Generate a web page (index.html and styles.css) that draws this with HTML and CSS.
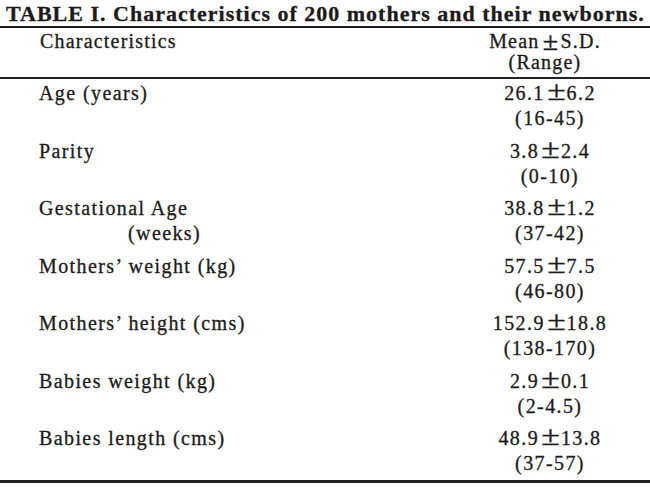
FILE: index.html
```html
<!DOCTYPE html>
<html lang="en">
<head>
<meta charset="utf-8">
<title>Table I</title>
<link rel="stylesheet" href="styles.css">
</head>
<body>
<div class="sheet">
  <h1 class="title">TABLE I. Characteristics of 200 mothers and their newborns.</h1>
  <div class="head">
    <div class="label">Characteristics</div>
    <div class="value head-value">Mean<span class="pm pm-head">±</span>S.D.<br>(Range)</div>
  </div>
  <div class="rows">
    <div class="row">
      <div class="label">Age (years)</div>
      <div class="value">26.1<span class="pm">±</span>6.2<br>(16-45)</div>
    </div>
    <div class="row">
      <div class="label">Parity</div>
      <div class="value">3.8<span class="pm">±</span>2.4<br>(0-10)</div>
    </div>
    <div class="row">
      <div class="label">Gestational Age<br><span class="indent">(weeks)</span></div>
      <div class="value">38.8<span class="pm">±</span>1.2<br>(37-42)</div>
    </div>
    <div class="row">
      <div class="label">Mothers’ weight (kg)</div>
      <div class="value">57.5<span class="pm">±</span>7.5<br>(46-80)</div>
    </div>
    <div class="row">
      <div class="label">Mothers’ height (cms)</div>
      <div class="value">152.9<span class="pm">±</span>18.8<br>(138-170)</div>
    </div>
    <div class="row">
      <div class="label">Babies weight (kg)</div>
      <div class="value">2.9<span class="pm">±</span>0.1<br>(2-4.5)</div>
    </div>
    <div class="row">
      <div class="label">Babies length (cms)</div>
      <div class="value">48.9<span class="pm">±</span>13.8<br>(37-57)</div>
    </div>
  </div>
</div>
</body>
</html>
```
FILE: styles.css
```css
html, body {
  margin: 0;
  padding: 0;
  background: #ffffff;
}

.sheet {
  width: 650px;
  color: #1c1a1a;
  font-family: "Liberation Serif", "DejaVu Serif", serif;
}

.title {
  margin: 0;
  padding: 2px 0 0 6px;
  font-size: 22px;
  line-height: 24px;
  font-weight: bold;
  letter-spacing: 1px;
  white-space: nowrap;
  -webkit-text-stroke: 0.3px #1c1a1a;
  border-bottom: 2px solid #1a1a1a;
}

.head {
  display: grid;
  grid-template-columns: 1fr 200px;
  padding: 2.5px 0 4.5px 0;
  font-size: 20px;
  line-height: 21px;
  letter-spacing: 1.2px;
  -webkit-text-stroke: 0.3px #1c1a1a;
  border-bottom: 2px solid #222;
}

.head .label {
  padding-left: 40px;
}

.head-value {
  padding-right: 10px;
}

.rows {
  padding: 2px 0 4px 0;
  border-bottom: 3px solid #1e1e1e;
}

.row {
  display: grid;
  grid-template-columns: 1fr 200px;
  font-size: 20px;
  line-height: 25px;
  letter-spacing: 1.4px;
  -webkit-text-stroke: 0.3px #1c1a1a;
  padding-bottom: 7.5px;
}

.row:last-child {
  padding-bottom: 0;
}

.label {
  padding-left: 39px;
  white-space: nowrap;
}

.indent {
  padding-left: 89px;
}

.value {
  text-align: center;
  white-space: nowrap;
}

.pm {
  display: inline-block;
  font-size: 1.35em;
  line-height: 0;
  margin: 0 3px 0 4px;
  letter-spacing: 0;
  transform: scaleX(1.25);
}

.pm-head {
  font-size: 1em;
  margin: 0 4px 0 6px;
  transform: scale(1.4, 1.3);
}
```
